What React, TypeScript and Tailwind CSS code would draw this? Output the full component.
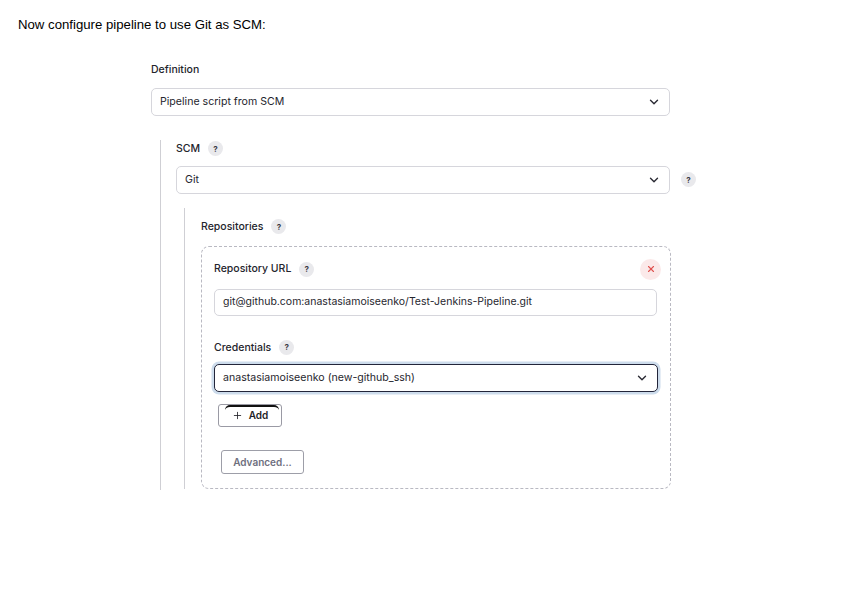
import { ChevronDown, Plus, X } from 'lucide-react'

// small grey "?" bubble used next to field labels
function Help({ className = '' }: { className?: string }) {
  return (
    <span
      className={`inline-flex h-[15px] w-[15px] shrink-0 items-center justify-center rounded-full bg-[#e9e9ec] text-[8px] font-bold text-[#3a3a44] ${className}`}
    >
      ?
    </span>
  )
}

function Label({ text }: { text: string }) {
  return (
    <div className="flex items-center gap-[8px] text-[10.5px] font-medium text-[#24242c]">
      <span>{text}</span>
      <Help />
    </div>
  )
}

function Select({ value, width, focused = false }: { value: string; width: string; focused?: boolean }) {
  const border = focused
    ? 'border-[1.5px] border-[#22253a] shadow-[0_0_0_2.5px_#cddcec]'
    : 'border border-[#d6d6dc]'
  return (
    <div className={`flex h-[28px] shrink-0 items-center justify-between rounded-[5px] bg-white pl-[8px] pr-[8px] ${border} ${width}`}>
      <span className="text-[10.6px] text-[#26262e]">{value}</span>
      <ChevronDown size={14} strokeWidth={2.4} className="text-[#2a2a33]" />
    </div>
  )
}

export default function App() {
  return (
    <div className="min-h-screen bg-white" style={{ fontFamily: 'Inter, "Liberation Sans", sans-serif' }}>
      <p className="pl-[18px] pt-[17px] text-[13.2px] leading-[16px] text-black" style={{ fontFamily: '"Liberation Sans", Arial, sans-serif' }}>
        Now configure pipeline to use Git as SCM:
      </p>

      <div className="ml-[151px] mt-[29px] w-[520px]">
        <div className="text-[10.5px] font-medium leading-[16px] text-[#24242c]">Definition</div>
        <div className="mt-[10px]">
          <Select value="Pipeline script from SCM" width="w-[519px]" />
        </div>

        {/* SCM block */}
        <div className="ml-[9px] mt-[24px] border-l-[1.5px] border-[#cfcfd4] pl-[15px] pb-[1px]">
          <div className="pt-[1px]">
            <Label text="SCM" />
          </div>
          <div className="mt-[9px] flex items-center">
            <Select value="Git" width="w-[494px]" />
            <Help className="ml-[11px]" />
          </div>

          {/* Repositories block */}
          <div className="ml-[8px] mt-[14px] border-l-[1.5px] border-[#cfcfd4] pl-[16px]">
            <div className="pt-[11px]">
              <Label text="Repositories" />
            </div>

            <div className="mt-[11px] w-[470px] rounded-[8px] border border-dashed border-[#b9b9c2] px-[12px] pb-[14px] pt-[12px]">
              <div className="flex items-center justify-between">
                <Label text="Repository URL" />
                <span className="mr-[-3px] inline-flex h-[21px] w-[21px] items-center justify-center rounded-full bg-[#fbe9e9]">
                  <X size={10} strokeWidth={2.6} className="text-[#e0524f]" />
                </span>
              </div>
              <div className="mt-[9px] flex h-[27px] w-[443px] items-center rounded-[5px] border border-[#d6d6dc] bg-white px-[8px] text-[10.5px] text-[#26262e]">
                git@github.com:anastasiamoiseenko/Test-Jenkins-Pipeline.git
              </div>

              <div className="mt-[24px]">
                <Label text="Credentials" />
              </div>
              <div className="mt-[9px]">
                <Select value="anastasiamoiseenko (new-github_ssh)" width="w-[444px]" focused />
              </div>

              <div className="relative ml-[4px] mt-[12px] w-[64px]">
                <span className="absolute left-[7px] right-[3px] top-[1px] h-[5px] rounded-t-full border-t-[2.5px] border-[#111]" />
                <div className="flex h-[23px] w-[64px] items-center justify-center gap-[6px] rounded-[3px] border border-[#9a9aa4] bg-white text-[10px] font-semibold text-[#1e1e26]">
                  <Plus size={11} strokeWidth={1.8} />
                  <span>Add</span>
                </div>
              </div>

              <div className="ml-[7px] mt-[23px] flex h-[24px] w-[83px] items-center justify-center rounded-[3px] border-[1.5px] border-[#9d9ea8] text-[10px] font-semibold text-[#6e6f7e]">
                Advanced...
              </div>
            </div>
          </div>
        </div>
      </div>
    </div>
  )
}
